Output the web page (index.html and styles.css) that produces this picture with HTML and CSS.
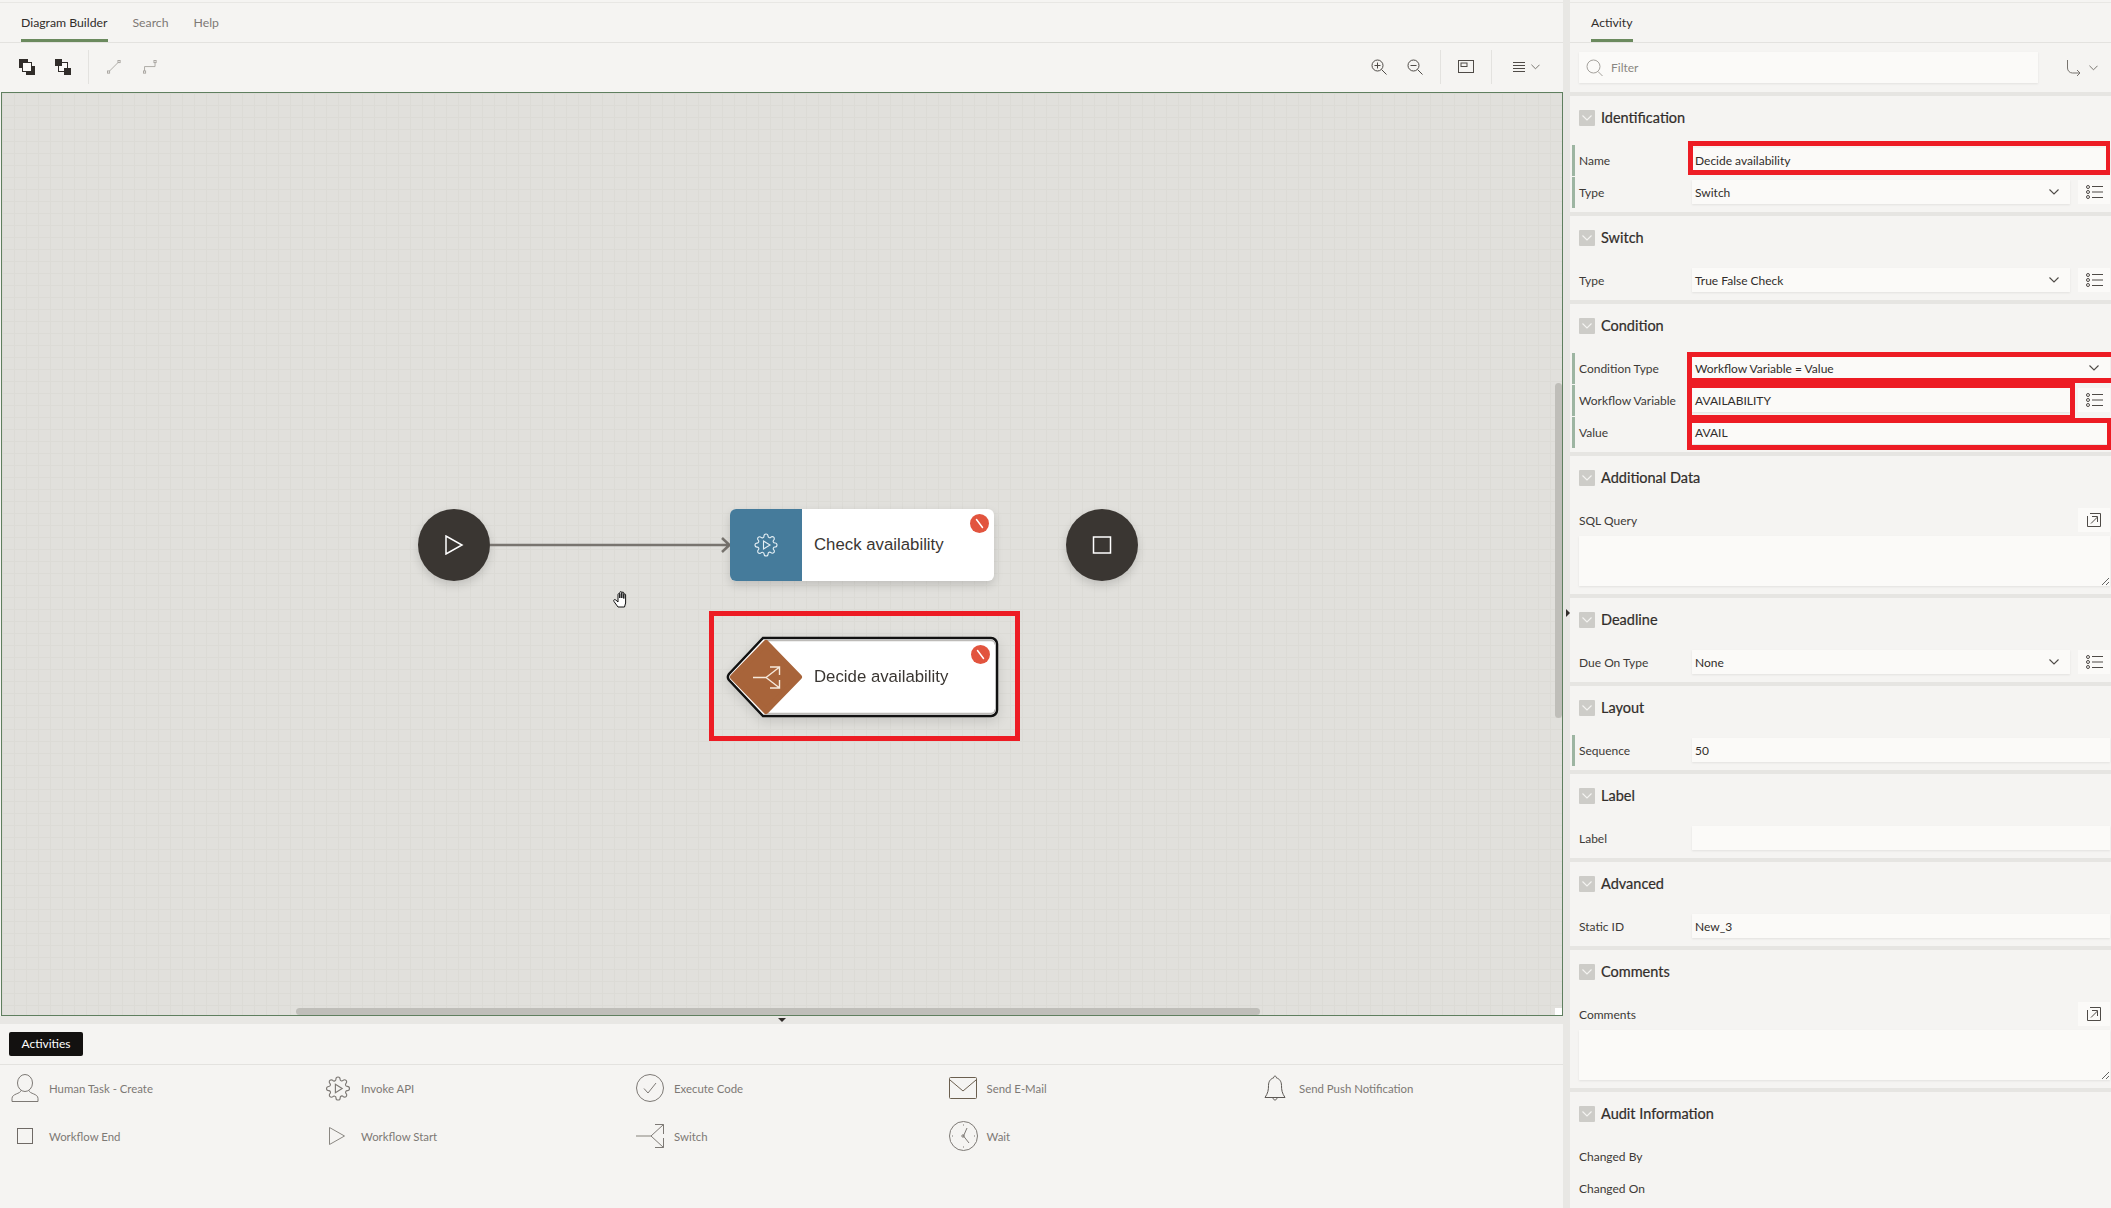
FILE: index.html
```html
<!DOCTYPE html>
<html lang="en">

<head>
  <meta charset="UTF-8" />
  <title>Diagram Builder</title>
  <link rel="stylesheet" href="styles.css">
</head>

<body>

  <!-- shared icons -->
  <svg class="defs" width="0" height="0">
    <symbol id="i-chev" viewBox="0 0 10 6"><path d="M.5.5 5 5 9.500.5" fill="none" stroke="currentColor" stroke-width="1.100" /></symbol>
    <symbol id="i-list" viewBox="0 0 17 14">
      <g fill="none" stroke="currentColor" stroke-width="1">
        <circle cx="2" cy="2" r="1.500" /><circle cx="2" cy="7" r="1.500" /><circle cx="2" cy="12" r="1.500" />
        <path d="M6 1.500h11M6 7h11M6 12.500h11" />
      </g>
    </symbol>
    <symbol id="i-expand" viewBox="0 0 14 14">
      <path d="M3 .5h10.500v13H.5V3M4 10.500l6.500-6.500M5 3.500h5.500V9" fill="none" stroke="currentColor" stroke-width="1" />
    </symbol>
    <symbol id="i-gear" viewBox="0 0 24 24">
      <path fill="none" stroke="currentColor" stroke-width="1.100" d="M19.400 15a1.650 1.650 0 00.330 1.820l.060.060a2 2 0 010 2.830 2 2 0 01-2.830 0l-.060-.060a1.650 1.650 0 00-1.820-.330 1.650 1.650 0 00-1 1.510V21a2 2 0 01-2 2 2 2 0 01-2-2v-.090A1.650 1.650 0 009 19.400a1.650 1.650 0 00-1.820.330l-.060.060a2 2 0 01-2.830 0 2 2 0 010-2.830l.060-.060a1.650 1.650 0 00.330-1.820 1.650 1.650 0 00-1.510-1H3a2 2 0 01-2-2 2 2 0 012-2h.090A1.650 1.650 0 004.600 9a1.650 1.650 0 00-.330-1.820l-.060-.060a2 2 0 010-2.830 2 2 0 012.830 0l.060.060a1.650 1.650 0 001.820.330H9a1.650 1.650 0 001-1.510V3a2 2 0 012-2 2 2 0 012 2v.090a1.650 1.650 0 001 1.510 1.650 1.650 0 001.820-.330l.060-.060a2 2 0 012.830 0 2 2 0 010 2.830l-.060.060a1.650 1.650 0 00-.330 1.820V9a1.650 1.650 0 001.510 1H21a2 2 0 012 2 2 2 0 01-2 2h-.090a1.650 1.650 0 00-1.510 1z" />
      <path fill="none" stroke="currentColor" stroke-width="1.100" d="M9.500 8v8l6.500-4z" />
    </symbol>
    <symbol id="i-badge" viewBox="0 0 19 19">
      <circle cx="9.500" cy="9.500" r="9.500" fill="#e2543e" />
      <path d="M6.500 5.500l6 8" stroke="#fff" stroke-width="1.500" stroke-linecap="round" />
    </symbol>
  </svg>

  <div class="app">

    <!-- left side: builder -->
    <div class="builder">
      <div class="tabs">
        <a class="tab active">Diagram Builder</a>
        <a class="tab">Search</a>
        <a class="tab">Help</a>
      </div>

      <div class="toolbar">
        <svg class="tool" viewBox="0 0 16 16">
          <rect x="0" y="0" width="9" height="9" fill="#312d2a" />
          <rect x="7" y="7" width="9" height="9" fill="#312d2a" />
          <rect x="3.500" y="3.500" width="9" height="9" fill="#fbfaf8" stroke="#312d2a" />
        </svg>
        <svg class="tool" viewBox="0 0 16 16">
          <rect x="3.500" y="3.500" width="9" height="9" fill="#fbfaf8" stroke="#312d2a" />
          <rect x="0" y="0" width="7" height="7" fill="#312d2a" />
          <rect x="9" y="9" width="7" height="7" fill="#312d2a" />
        </svg>
        <span class="tool-sep sep-left"></span>
        <svg class="tool dim" viewBox="0 0 16 16" fill="none" stroke="#a5a29d">
          <rect x=".5" y="12.500" width="2.500" height="2.500" /><rect x="12.500" y=".5" width="2.500" height="2.500" />
          <path d="M3 12.500 12.500 3" />
        </svg>
        <svg class="tool dim" viewBox="0 0 16 16" fill="none" stroke="#a5a29d">
          <rect x=".5" y="12.500" width="2.500" height="2.500" /><rect x="12.500" y=".5" width="2.500" height="2.500" />
          <path d="M1.750 12.500V7.500h12V3" />
        </svg>

        <span class="grow"></span>

        <svg class="tool" viewBox="0 0 16 16" fill="none" stroke="#4f4b47">
          <circle cx="6.500" cy="6.500" r="5.500" /><path d="M10.500 10.500 15.500 15.500M3.500 6.500h6M6.500 3.500v6" />
        </svg>
        <svg class="tool" viewBox="0 0 16 16" fill="none" stroke="#4f4b47">
          <circle cx="6.500" cy="6.500" r="5.500" /><path d="M10.500 10.500 15.500 15.500M3.500 6.500h6" />
        </svg>
        <span class="tool-sep sep-map"></span>
        <svg class="tool minimap" viewBox="0 0 16 14" fill="none" stroke="#4f4b47">
          <rect x=".5" y=".5" width="15" height="12" /><rect x="3" y="3" width="6" height="3.500" />
        </svg>
        <span class="tool-sep sep-menu"></span>
        <svg class="tool menu" viewBox="0 0 12 12" stroke="#4f4b47"><path d="M0 1.500h12M0 4.500h12M0 7.500h12M0 10.500h12" /></svg>
        <svg class="chev-sm"><use href="#i-chev" /></svg>
      </div>

      <div class="canvas">
        <div class="node-round start">
          <svg width="20" height="20" viewBox="0 0 20 20"><path d="M2 1v18l16-9z" fill="none" stroke="#fff" stroke-width="1.500" /></svg>
        </div>

        <svg class="link" width="244" height="16" viewBox="0 0 244 16">
          <path d="M0 8h240M232 1l7.500 7-7.500 7" fill="none" stroke="#78746f" stroke-width="2.500" />
        </svg>

        <div class="node check">
          <div class="node-icon"><svg width="24" height="24"><use href="#i-gear" /></svg></div>
          <span class="node-text">Check availability</span>
          <svg class="badge"><use href="#i-badge" /></svg>
        </div>

        <div class="node-round end">
          <svg width="20" height="18" viewBox="0 0 20 18"><rect x="1.500" y="1" width="17" height="16" fill="none" stroke="#fff" stroke-width="1.500" /></svg>
        </div>

        <div class="node-switch">
          <svg width="278" height="86" viewBox="0 0 278 86">
            <path d="M39 4H267a6 6 0 016 6V76a6 6 0 01-6 6H39L5 46a5 5 0 010-6z" fill="#fff" stroke="#111" stroke-width="2.500" />
            <path d="M42 6.500H267a4 4 0 014 4M42 79.500H267a4 4 0 004-4" fill="none" stroke="#bdbbb8" stroke-width="1.500" />
            <path d="M42 9 75 43 42 77 9 43z" fill="#a8643a" stroke="#a8643a" stroke-width="6" stroke-linejoin="round" />
            <path d="M29 43.500H42M42 43.500 55 33.500M46 33h9.500v8M42 43.500 55 53.500M46 54h9.500v-8" fill="none" stroke="#f6e9dc" stroke-width="1.400" />
          </svg>
          <span class="node-text">Decide availability</span>
          <svg class="badge"><use href="#i-badge" /></svg>
        </div>

        <div class="mark mark-node"></div>

        <svg class="hand" width="19" height="18" viewBox="0 0 19 18">
          <path d="M6 17 2 11.500C1 10 2.500 9 3.800 10L6 12V4.500C6 3.300 7.800 3.300 7.800 4.500V8 2.500C7.800 1.300 9.800 1.300 9.800 2.500V8 3C9.800 1.800 11.800 1.800 11.800 3V8.500 4.800C11.800 3.600 13.600 3.600 13.600 4.800V13L12.500 17Z" fill="#fff" stroke="#111" stroke-width="1" />
        </svg>

        <div class="scroll-h"></div>
        <div class="scroll-v"></div>
        <div class="scroll-corner"></div>
      </div>

      <div class="split-h"><span class="tri-down"></span></div>

      <div class="palette">
        <div class="palette-tabs"><span class="palette-tab">Activities</span></div>
        <div class="palette-grid">
          <div class="pal-item">
            <svg class="pal-icon" width="28" height="28" viewBox="0 0 28 28" fill="none" stroke="#7d7975">
              <ellipse cx="14" cy="9" rx="7.500" ry="8.500" /><path d="M10 16.500C9.500 20 1 19.500 1 24.500V27.500H27V24.500C27 19.500 18.500 20 18 16.500" />
            </svg>
            <span>Human Task - Create</span>
          </div>
          <div class="pal-item">
            <svg class="pal-icon gear" width="26" height="25"><use href="#i-gear" /></svg>
            <span>Invoke API</span>
          </div>
          <div class="pal-item">
            <svg class="pal-icon" width="28" height="28" viewBox="0 0 28 28" fill="none" stroke="#7d7975">
              <ellipse cx="14" cy="14" rx="13.500" ry="13.500" /><path d="M8 14.500 12 19 20 9" />
            </svg>
            <span>Execute Code</span>
          </div>
          <div class="pal-item">
            <svg class="pal-icon" width="28" height="22" viewBox="0 0 28 22" fill="none" stroke="#6b5f4f">
              <rect x=".5" y=".5" width="27" height="21" rx="1" /><path d="M1 3 14 14 27 3" />
            </svg>
            <span>Send E-Mail</span>
          </div>
          <div class="pal-item">
            <svg class="pal-icon bell" width="22" height="26" viewBox="0 0 22 26" fill="none" stroke="#5c5854">
              <path d="M1 22.500C4 18 4.500 15 4.500 10.500 4.500 6 7 3.500 9.500 3 9.500 .5 12.500 .5 12.500 3 15 3.500 17.500 6 17.500 10.500 17.500 15 18 18 21 22.500ZM9 22.500C9 25.800 13 25.800 13 22.500" />
            </svg>
            <span>Send Push Notification</span>
          </div>

          <div class="pal-item">
            <svg class="pal-icon square" width="16" height="16" viewBox="0 0 16 16" fill="none" stroke="#6f6a66"><rect x=".5" y=".5" width="15" height="15" /></svg>
            <span>Workflow End</span>
          </div>
          <div class="pal-item">
            <svg class="pal-icon play" width="16" height="18" viewBox="0 0 16 18" fill="none" stroke="#8a8782"><path d="M.5.5v17L15.500 9z" /></svg>
            <span>Workflow Start</span>
          </div>
          <div class="pal-item">
            <svg class="pal-icon" width="28" height="24" viewBox="0 0 28 24" fill="none" stroke="#7d7975">
              <path d="M0 12H15" stroke="#bdbbb6" stroke-width="2" />
              <path d="M15 12 27.500 .5M19 .5h8.500V10M15 12 27.500 23.500M19 23.500h8.500V14" />
            </svg>
            <span>Switch</span>
          </div>
          <div class="pal-item">
            <svg class="pal-icon clock" width="29" height="30" viewBox="0 0 29 30" fill="none" stroke="#7d7975">
              <ellipse cx="14.500" cy="15" rx="14" ry="14.500" />
              <path d="M14.500 15 18 7M14.500 15 20 22M14.500 3.500v1M14.500 25.500v1M3 15h1M25 15h1" />
              <circle cx="14" cy="15" r="1.200" />
            </svg>
            <span>Wait</span>
          </div>
        </div>
      </div>
    </div>

    <div class="split-v"><span class="tri-right"></span></div>

    <!-- right side: property editor -->
    <div class="props">
      <div class="tabs"><a class="tab active">Activity</a></div>

      <div class="filter-bar">
        <div class="filter">
          <svg width="18" height="18" viewBox="0 0 18 18" fill="none" stroke="#a5a29d"><circle cx="7.500" cy="7.500" r="6.500" /><path d="M12 12.500 16.500 17" /></svg>
          <span>Filter</span>
        </div>
        <svg class="goto" width="14" height="16" viewBox="0 0 14 16" fill="none" stroke="#77736e"><path d="M.5 0V8a5 5 0 005 5H13M10 10l3 3-3 3" /></svg>
        <svg class="chev-sm"><use href="#i-chev" /></svg>
      </div>

      <section>
        <h3><span class="collapse"><svg width="10" height="6"><use href="#i-chev" /></svg></span>Identification</h3>
        <div class="row req"><label>Name</label><div class="field">Decide availability</div></div>
        <div class="row req"><label>Type</label><div class="field select">Switch<svg class="chev"><use href="#i-chev" /></svg></div><button><svg width="17" height="14"><use href="#i-list" /></svg></button></div>
      </section>

      <section>
        <h3><span class="collapse"><svg width="10" height="6"><use href="#i-chev" /></svg></span>Switch</h3>
        <div class="row"><label>Type</label><div class="field select">True False Check<svg class="chev"><use href="#i-chev" /></svg></div><button><svg width="17" height="14"><use href="#i-list" /></svg></button></div>
      </section>

      <section>
        <h3><span class="collapse"><svg width="10" height="6"><use href="#i-chev" /></svg></span>Condition</h3>
        <div class="row req"><label>Condition Type</label><div class="field select">Workflow Variable = Value<svg class="chev"><use href="#i-chev" /></svg></div></div>
        <div class="row req"><label>Workflow Variable</label><div class="field">AVAILABILITY</div><button><svg width="17" height="14"><use href="#i-list" /></svg></button></div>
        <div class="row req"><label>Value</label><div class="field">AVAIL</div></div>
      </section>

      <section>
        <h3><span class="collapse"><svg width="10" height="6"><use href="#i-chev" /></svg></span>Additional Data</h3>
        <div class="row"><label>SQL Query</label><span class="grow"></span><button><svg width="14" height="14"><use href="#i-expand" /></svg></button></div>
        <textarea></textarea>
      </section>

      <section>
        <h3><span class="collapse"><svg width="10" height="6"><use href="#i-chev" /></svg></span>Deadline</h3>
        <div class="row"><label>Due On Type</label><div class="field select">None<svg class="chev"><use href="#i-chev" /></svg></div><button><svg width="17" height="14"><use href="#i-list" /></svg></button></div>
      </section>

      <section>
        <h3><span class="collapse"><svg width="10" height="6"><use href="#i-chev" /></svg></span>Layout</h3>
        <div class="row req"><label>Sequence</label><div class="field">50</div></div>
      </section>

      <section>
        <h3><span class="collapse"><svg width="10" height="6"><use href="#i-chev" /></svg></span>Label</h3>
        <div class="row"><label>Label</label><div class="field"></div></div>
      </section>

      <section>
        <h3><span class="collapse"><svg width="10" height="6"><use href="#i-chev" /></svg></span>Advanced</h3>
        <div class="row"><label>Static ID</label><div class="field">New_3</div></div>
      </section>

      <section>
        <h3><span class="collapse"><svg width="10" height="6"><use href="#i-chev" /></svg></span>Comments</h3>
        <div class="row"><label>Comments</label><span class="grow"></span><button><svg width="14" height="14"><use href="#i-expand" /></svg></button></div>
        <textarea></textarea>
      </section>

      <section>
        <h3><span class="collapse"><svg width="10" height="6"><use href="#i-chev" /></svg></span>Audit Information</h3>
        <div class="row"><label>Changed By</label></div>
        <div class="row"><label>Changed On</label></div>
      </section>

      <!-- red annotation boxes -->
      <div class="mark mark-name"></div>
      <div class="mark mark-cond"></div>
      <div class="mark mark-var"></div>
      <div class="mark mark-val"></div>
    </div>

  </div>

</body>

</html>
```

FILE: styles.css
```css
* {
  box-sizing: border-box;
}

html,
body {
  margin: 0;
  height: 100%;
  overflow: hidden;
}

body {
  font-family: Lato, "Noto Sans", sans-serif;
  font-size: 12px;
  color: #3d3a37;
  background-color: #f5f4f2;
}

.defs {
  position: absolute;
}

.grow {
  flex: 1;
}

.app {
  display: flex;
  height: 1208px;
  overflow: hidden;
  padding-top: 2px;
}

.builder {
  width: 1563px;
  display: flex;
  flex-direction: column;
}

.split-v {
  position: relative;
  width: 7px;
  margin-top: -2px;
  background-color: #e8e7e4;
}

.tri-right {
  position: absolute;
  left: 3px;
  top: 609px;
  border-left: 4px solid #312d2a;
  border-top: 4px solid transparent;
  border-bottom: 4px solid transparent;
}

.props {
  position: relative;
  flex: 1;
  overflow: hidden;
}

/* tabs */
.tabs {
  display: flex;
  gap: 25px;
  height: 41px;
  padding-left: 21px;
  border-top: 1px solid #e8e7e4;
  border-bottom: 1px solid #e3e2df;
}

.tab {
  height: 39px;
  line-height: 40px;
  font-size: 12.250px;
  color: #7d7975;
}

.tab.active {
  color: #312d2a;
  border-bottom: 3px solid #6b8a5e;
}

/* toolbar */
.toolbar {
  display: flex;
  align-items: center;
  height: 49px;
  padding-left: 19px;
  padding-right: 23px;
  padding-bottom: 1px;
}

.tool {
  width: 16px;
  height: 16px;
  margin-right: 20px;
}

.tool.dim {
  width: 14px;
  height: 14px;
  margin-right: 22px;
}

.tool.minimap {
  height: 14px;
  margin-right: 17px;
}

.tool.menu {
  width: 12px;
  height: 12px;
  margin-right: 6px;
}

.tool-sep {
  width: 1px;
  height: 34px;
  background-color: #e3e2df;
}

.sep-left {
  margin-left: -3px;
  margin-right: 18px;
}

.sep-map {
  margin-left: -3px;
  margin-right: 17px;
}

.sep-menu {
  margin-right: 21px;
}

.chev-sm {
  width: 9px;
  height: 6px;
  color: #77736e;
}

/* canvas */
.canvas {
  position: relative;
  height: 924px;
  margin-left: 1px;
  overflow: hidden;
  border: 1px solid #5f7f5f;
  background-color: #e1e0dc;
  background-image:
    linear-gradient(#dcdbd6 1px, transparent 1px),
    linear-gradient(90deg, #dcdbd6 1px, transparent 1px);
  background-size: 12px 12px;
}

.node-round {
  position: absolute;
  top: 416px;
  width: 72px;
  height: 72px;
  display: flex;
  align-items: center;
  justify-content: center;
  border-radius: 50%;
  background-color: #3a3632;
  box-shadow: 0 4px 10px rgba(0, 0, 0, 0.15);
}

.start {
  left: 416px;
}

.end {
  left: 1064px;
}

.link {
  position: absolute;
  left: 488px;
  top: 444px;
}

.node {
  position: absolute;
  left: 728px;
  top: 416px;
  width: 264px;
  height: 72px;
  display: flex;
  align-items: center;
  border-radius: 6px;
  background-color: #fff;
  box-shadow: 0 4px 10px rgba(0, 0, 0, 0.15);
}

.node-icon {
  width: 72px;
  height: 72px;
  margin-right: 12px;
  display: flex;
  align-items: center;
  justify-content: center;
  border-radius: 6px 0 0 6px;
  color: #e6f0f5;
  background-color: #457b9b;
}

.node-text {
  font-family: "Liberation Sans", Arial, sans-serif;
  font-size: 16.800px;
  color: #3a3632;
}

.badge {
  position: absolute;
  right: 5px;
  top: 5px;
  width: 19px;
  height: 19px;
}

.node-switch {
  position: absolute;
  left: 722px;
  top: 541px;
  width: 278px;
  height: 86px;
  filter: drop-shadow(0 4px 6px rgba(0, 0, 0, 0.12));
}

.node-switch .node-text {
  position: absolute;
  left: 90px;
  top: 33px;
}

.node-switch .badge {
  right: 12px;
  top: 11px;
}

.hand {
  position: absolute;
  left: 610px;
  top: 497px;
}

.scroll-h {
  position: absolute;
  left: 294px;
  right: 302px;
  bottom: 0;
  height: 7px;
  border-radius: 4px;
  background-color: #bfbeb9;
}

.scroll-v {
  position: absolute;
  right: 0;
  top: 290px;
  width: 7px;
  height: 335px;
  border-radius: 4px;
  background-color: #bfbeb9;
}

.scroll-corner {
  position: absolute;
  right: 0;
  bottom: 0;
  width: 7px;
  height: 7px;
  background-color: #fff;
}

.split-h {
  position: relative;
  height: 8px;
  background-color: #e8e7e4;
}

.tri-down {
  position: absolute;
  left: 778px;
  top: 2px;
  border-top: 4px solid #312d2a;
  border-left: 4px solid transparent;
  border-right: 4px solid transparent;
}

/* palette */
.palette {
  flex: 1;
}

.palette-tabs {
  height: 41px;
  padding: 8px 0 0 9px;
  border-bottom: 1px solid #e3e2df;
}

.palette-tab {
  display: inline-block;
  width: 74px;
  height: 24px;
  line-height: 24px;
  text-align: center;
  border-radius: 2px;
  color: #fff;
  background-color: #131110;
}

.palette-grid {
  display: grid;
  grid-template-columns: repeat(5, 312.500px);
  grid-auto-rows: 48px;
  padding-left: 11px;
  margin-top: -1px;
}

.pal-item {
  display: flex;
  align-items: center;
  color: #7d7975;
  font-size: 11.400px;
}

.pal-item span {
  margin-left: 10px;
}

.pal-icon.gear {
  margin-left: 1.500px;
  color: #7d7975;
}

.pal-icon.square {
  margin-left: 6px;
  margin-right: 6px;
}

.pal-icon.play {
  margin-left: 5.500px;
  margin-right: 6px;
}

.pal-icon.bell {
  margin-left: 3px;
  margin-right: 3px;
}

.pal-icon.clock {
  margin-right: -1px;
}

/* property editor */
.filter-bar {
  display: flex;
  align-items: flex-start;
  height: 53px;
  padding: 9px 0 0 9px;
  border-bottom: 4px solid #e6e5e2;
}

.filter {
  width: 459px;
  height: 31px;
  display: flex;
  align-items: center;
  gap: 7px;
  padding-left: 7px;
  color: #8a8782;
  background-color: #fbfaf8;
  box-shadow: 0 1px 2px rgba(0, 0, 0, 0.08);
}

.goto {
  margin: 8px 8px 0 29px;
}

.filter-bar .chev-sm {
  margin-top: 13px;
}

section {
  padding-bottom: 3px;
  border-bottom: 4px solid #e6e5e2;
}

h3 {
  margin: 0;
  height: 49px;
  padding: 14px 0 0 9px;
  display: flex;
  align-items: flex-start;
  gap: 6px;
  font-size: 14.500px;
  line-height: 16px;
  font-weight: 400;
  color: #312d2a;
  -webkit-text-stroke: 0.2px #312d2a;
}

.collapse {
  width: 16px;
  height: 16px;
  display: flex;
  align-items: center;
  justify-content: center;
  color: #f5f4f2;
  background-color: #cdccc8;
  border-radius: 1px;
}

.row {
  display: flex;
  height: 31px;
  margin: 0 1px 1px 2px;
  padding-left: 4px;
  padding-top: 3px;
  border-left: 3px solid transparent;
}

.row.req {
  border-left-color: #9db5a2;
}

label {
  width: 113px;
  flex-shrink: 0;
  line-height: 25px;
}

.field {
  position: relative;
  flex: 1;
  height: 24px;
  line-height: 25px;
  padding-left: 3px;
  color: #312d2a;
  background-color: #fbfaf8;
  box-shadow: 0 1px 2px rgba(0, 0, 0, 0.08);
}

.chev {
  position: absolute;
  right: 11px;
  top: 9px;
  width: 10px;
  height: 6px;
  color: #4f4b47;
}

button {
  width: 32px;
  height: 24px;
  margin-left: 8px;
  padding: 0;
  border: none;
  display: flex;
  align-items: center;
  justify-content: center;
  color: #4f4b47;
  background-color: #fbfaf8;
}

textarea {
  display: block;
  width: 531px;
  height: 50px;
  margin: -1px 0 5px 9px;
  border: none;
  resize: vertical;
  background-color: #fbfaf8;
  box-shadow: 0 1px 2px rgba(0, 0, 0, 0.08);
}

/* red annotation boxes */
.mark {
  position: absolute;
  border: 5px solid #ed1c24;
}

.mark-node {
  left: 707px;
  top: 518px;
  width: 311px;
  height: 130px;
}

.mark-name {
  left: 118px;
  top: 139px;
  width: 422px;
  height: 34px;
  border-right-width: 4px;
}

.mark-cond {
  left: 117px;
  top: 350px;
  width: 426px;
  height: 31px;
  border-right-width: 2px;
}

.mark-var {
  left: 117px;
  top: 381px;
  width: 388px;
  height: 37px;
}

.mark-val {
  left: 117px;
  top: 416px;
  width: 424px;
  height: 32px;
  border-right-width: 4px;
}
```
